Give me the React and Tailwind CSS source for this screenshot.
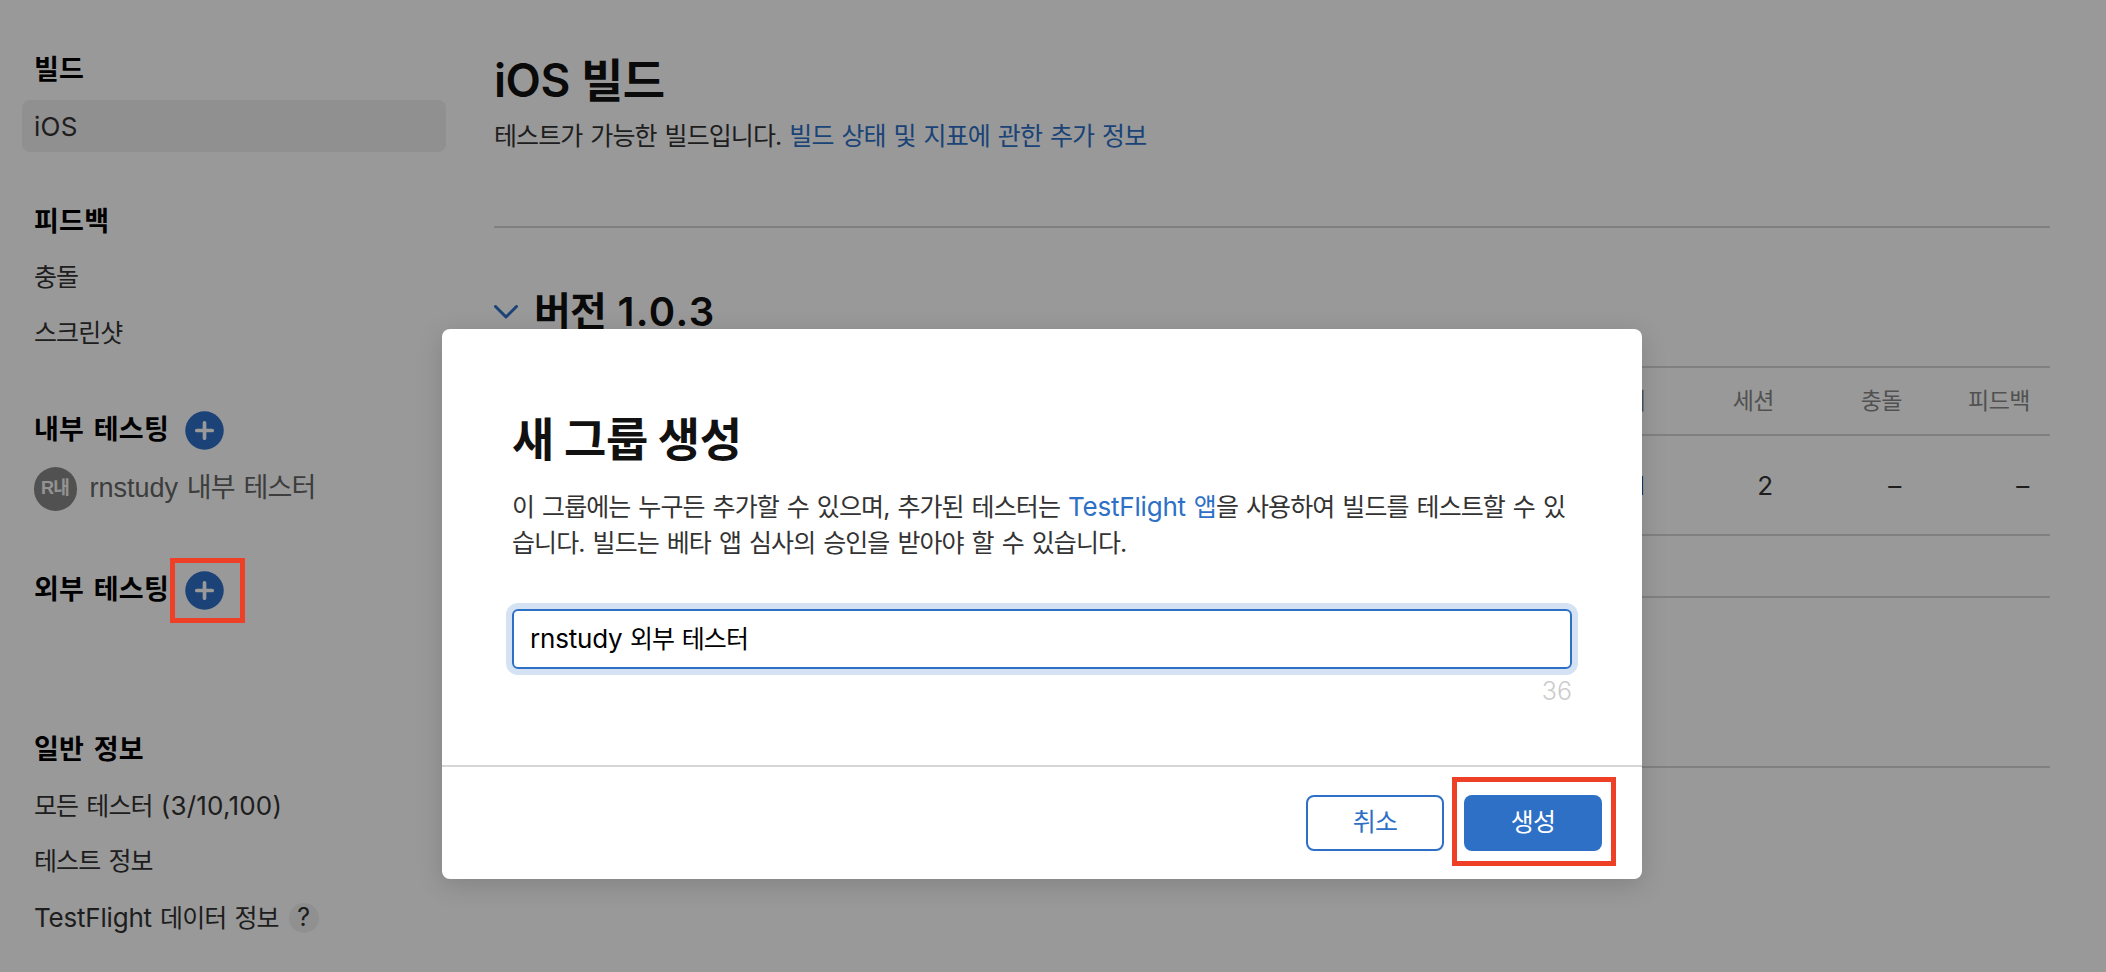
function PlusButton() {
  return (
    <svg className="size-[39px] shrink-0" viewBox="0 0 39 39" fill="none">
      <circle cx="19.5" cy="19.5" r="19.25" fill="#2d70c6" />
      <path d="M19.5 11.8v15.4M11.8 19.5h15.4" stroke="#fff" strokeWidth="3.7" strokeLinecap="round" />
    </svg>
  );
}

function Heading({ children }) {
  return <h2 className="text-[27px] font-semibold tracking-[0.25px] [word-spacing:2.5px] text-black">{children}</h2>;
}

function Item({ children, selected }) {
  return (
    <li className="flex h-14 items-center">
      <a className={selected ? "flex h-[52px] w-full items-center rounded-lg bg-[#f0f0f0] px-3" : "flex h-[52px] w-full items-center gap-[10px] px-3"}>
        {children}
      </a>
    </li>
  );
}

// Latin runs are set a little larger than the Korean text around them.
function Latin({ children }) {
  return <span className="text-[26px] tracking-[-0.2px]">{children}</span>;
}

function Sidebar() {
  return (
    <nav className="flex w-[424px] shrink-0 flex-col pt-[42px] text-[25px] tracking-[-0.9px] [word-spacing:2px] text-[#333]">
      <section className="mb-10">
        <div className="flex h-14 items-center pl-3"><Heading>빌드</Heading></div>
        <ul><Item selected><span className="text-[26px] tracking-[0.3px]">iOS</span></Item></ul>
      </section>
      <section className="mb-10">
        <div className="flex h-14 items-center pl-3"><Heading>피드백</Heading></div>
        <ul>
          <Item>충돌</Item>
          <Item>스크린샷</Item>
        </ul>
      </section>
      <section className="mb-12">
        <div className="flex h-14 items-center gap-4 pl-3"><Heading>내부 테스팅</Heading><PlusButton /></div>
        <div className="flex h-14 items-center gap-[13px] pt-[5px] pl-[11.5px] [font-family:'Liberation_Sans','Noto_Sans_CJK_KR',sans-serif]">
          <span className="flex h-[44px] w-[43px] items-center justify-center rounded-full bg-[#888] text-[18px] font-bold text-[#f5f5f5]">R내</span>
          <span className="text-[27px] tracking-[-0.8px] text-[#666]"><span className="tracking-normal">rnstudy</span> 내부 테스터</span>
        </div>
      </section>
      <section className="mb-[104px]">
        <div className="flex h-14 items-center gap-4 pl-3">
          <Heading>외부 테스팅</Heading>
          <div className="relative flex">
            <PlusButton />
            <div className="absolute -top-[13px] -left-[15px] z-20 h-[65px] w-[75px] border-[5px] border-[#ee4026]" />
          </div>
        </div>
      </section>
      <section>
        <div className="flex h-14 items-center pl-3"><Heading>일반 정보</Heading></div>
        <ul>
          <Item><span>모든 테스터 <span className="text-[26px] tracking-[0.2px]">(3/10,100)</span></span></Item>
          <Item>테스트 정보</Item>
          <Item>
            <span><Latin>TestFlight</Latin> 데이터 정보</span>
            <span className="flex size-[30px] items-center justify-center rounded-full bg-[#f0f0f0] tracking-normal">?</span>
          </Item>
        </ul>
      </section>
    </nav>
  );
}

const columns = [
  { name: "설치", value: "1" },
  { name: "세션", value: "2" },
  { name: "충돌", value: "–" },
  { name: "피드백", value: "–" },
];

function Builds() {
  return (
    <main className="ml-12 flex w-[1556px] flex-col pt-[50px]">
      <h1 className="text-[46px] leading-[60px] font-semibold tracking-[-0.5px] text-[#111]">iOS 빌드</h1>
      <p className="mt-1.5 h-10 text-[25px] leading-10 tracking-[-0.9px] [word-spacing:1.8px] text-[#333]">
        테스트가 가능한 빌드입니다. <a className="text-[#2d70c6]">빌드 상태 및 지표에 관한 추가 정보</a>
      </p>
      <div className="mt-[70px] h-0.5 bg-[#d6d6d6]" />
      <div className="mt-[54px] flex h-[60px] items-center gap-4">
        <svg className="w-[24px]" viewBox="0 0 24 14" fill="none">
          <path d="M1.5 1.5 12 12 22.5 1.5" stroke="#2d70c6" strokeWidth="3" strokeLinecap="round" strokeLinejoin="round" />
        </svg>
        <h2 className="text-[40px] leading-[60px] font-semibold tracking-[-0.9px] [word-spacing:2.5px] text-[#111]">버전 <span className="tracking-[1.4px]">1.0.3</span></h2>
      </div>
      <div className="mt-6 flex flex-col border-y-2 border-[#d6d6d6]">
        <div className="flex h-[68px] items-center justify-end border-b-2 border-[#d6d6d6] pr-5 text-[23px] tracking-[-0.5px] text-[#888]">
          {columns.map((c) => <div key={c.name} className="w-32 text-right">{c.name}</div>)}
        </div>
        <div className="flex h-[98px] items-center justify-end pr-5 text-[26px] tracking-[0.8px] text-[#333]">
          {columns.map((c) => <div key={c.name} className="w-32 text-right">{c.value}</div>)}
        </div>
      </div>
      <div className="h-[62px] border-b-2 border-[#d6d6d6]" />
      <div className="h-[170px] border-b-2 border-[#d6d6d6]" />
    </main>
  );
}

function Dialog() {
  return (
    <div className="flex h-[550px] w-[1200px] flex-col rounded-lg bg-white shadow-[0_6px_26px_rgba(0,0,0,0.15)]">
      <div className="flex flex-1 flex-col px-[70px] pt-[77px]">
        <h2 className="h-[60px] text-[46px] leading-[60px] font-bold tracking-[-0.4px] text-[#111] [font-family:'Noto_Sans_CJK_KR',sans-serif]">새 그룹 생성</h2>
        <p className="mt-[23px] text-[25px] leading-9 tracking-[-0.9px] whitespace-nowrap [word-spacing:1.8px] text-[#333]">
          이 그룹에는 누구든 추가할 수 있으며, 추가된 테스터는 <a className="text-[#2d70c6]"><Latin>TestFlight</Latin> 앱</a>을 사용하여 빌드를 테스트할 수 있
          <br />
          습니다. 빌드는 베타 앱 심사의 승인을 받아야 할 수 있습니다.
        </p>
        <div className="mt-12 flex h-[60px] items-center rounded-md border-2 border-[#2d70c6] px-4 text-[25px] tracking-[-0.9px] [word-spacing:1.4px] text-black ring-6 ring-[#d5e2f4]">
          <span><Latin>rnstudy</Latin> 외부 테스터</span>
        </div>
        <div className="mt-[7px] text-right text-[25px] leading-[30px] font-light text-[#ccc]">36</div>
      </div>
      <div className="flex h-[114px] shrink-0 items-start justify-end gap-5 border-t-2 border-[#d6d6d6] pt-7 pr-10 text-[25px] tracking-[-0.7px]">
        <button className="h-14 w-[138px] rounded-lg border-2 border-[#2d70c6] text-[#2d70c6]">취소</button>
        <div className="relative flex">
          <button className="h-14 w-[138px] rounded-lg bg-[#2d70c6] text-white">생성</button>
          <div className="absolute -top-[18px] -left-3 h-[89px] w-[164px] border-[5px] border-[#ee4026]" />
        </div>
      </div>
    </div>
  );
}

export default function App() {
  return (
    <div className="relative h-[972px] w-[2106px] overflow-hidden bg-white [font-family:Inter,'Noto_Sans_CJK_KR',sans-serif]">
      <div className="flex pl-[22px]"><Sidebar /><Builds /></div>
      <div className="absolute inset-0 z-10 bg-black/40 pt-[329px] pl-[442px]"><Dialog /></div>
    </div>
  );
}
